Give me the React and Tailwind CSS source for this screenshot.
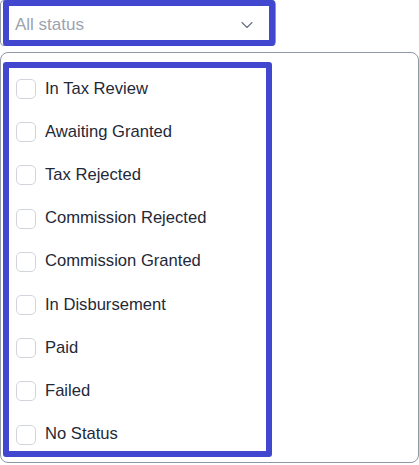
import { ChevronDown } from "lucide-react";

// status filter dropdown, opened, with the annotated highlight boxes on top
const STATUSES = [
  "In Tax Review",
  "Awaiting Granted",
  "Tax Rejected",
  "Commission Rejected",
  "Commission Granted",
  "In Disbursement",
  "Paid",
  "Failed",
  "No Status",
];

export default function App() {
  return (
    <div className="relative w-[419px] h-[465px] bg-white overflow-hidden font-['Liberation_Sans',Arial,sans-serif]">
      {/* ── SELECT ── */}
      <button className="flex items-center justify-between w-[276px] h-[46px] border border-[#8f97a8] rounded-[4px] pl-[14px] pr-[18px] pt-[3px] bg-white">
        <span className="text-[17px] text-[#9ca3af]">All status</span>
        <ChevronDown className="w-[20px] h-[20px] text-[#6b7280]" strokeWidth={1.4} />
      </button>

      {/* ── DROPDOWN PANEL ── */}
      <div className="mt-[6px] h-[411px] border border-[#8f97a8] rounded-[8px] pt-[26px] pl-[15px] flex flex-col gap-[23.2px]">
        {STATUSES.map(s => (
          <label key={s} className="flex items-center h-[20px] gap-[9px]">
            <span className="w-[20px] h-[20px] rounded-[5px] border border-[#d1d5db] bg-white shrink-0" />
            <span className="text-[16.6px] text-[#1f2937] leading-none">{s}</span>
          </label>
        ))}
      </div>

      {/* ── HIGHLIGHT OVERLAYS ── */}
      <div className="absolute left-[3px] top-0 w-[272px] h-[46px] border-[6px] border-[#4148cf] rounded-[3px] pointer-events-none" />
      <div className="absolute left-[3px] top-[62px] w-[269px] h-[395px] border-[6px] border-[#4148cf] rounded-[3px] pointer-events-none" />
    </div>
  );
}
